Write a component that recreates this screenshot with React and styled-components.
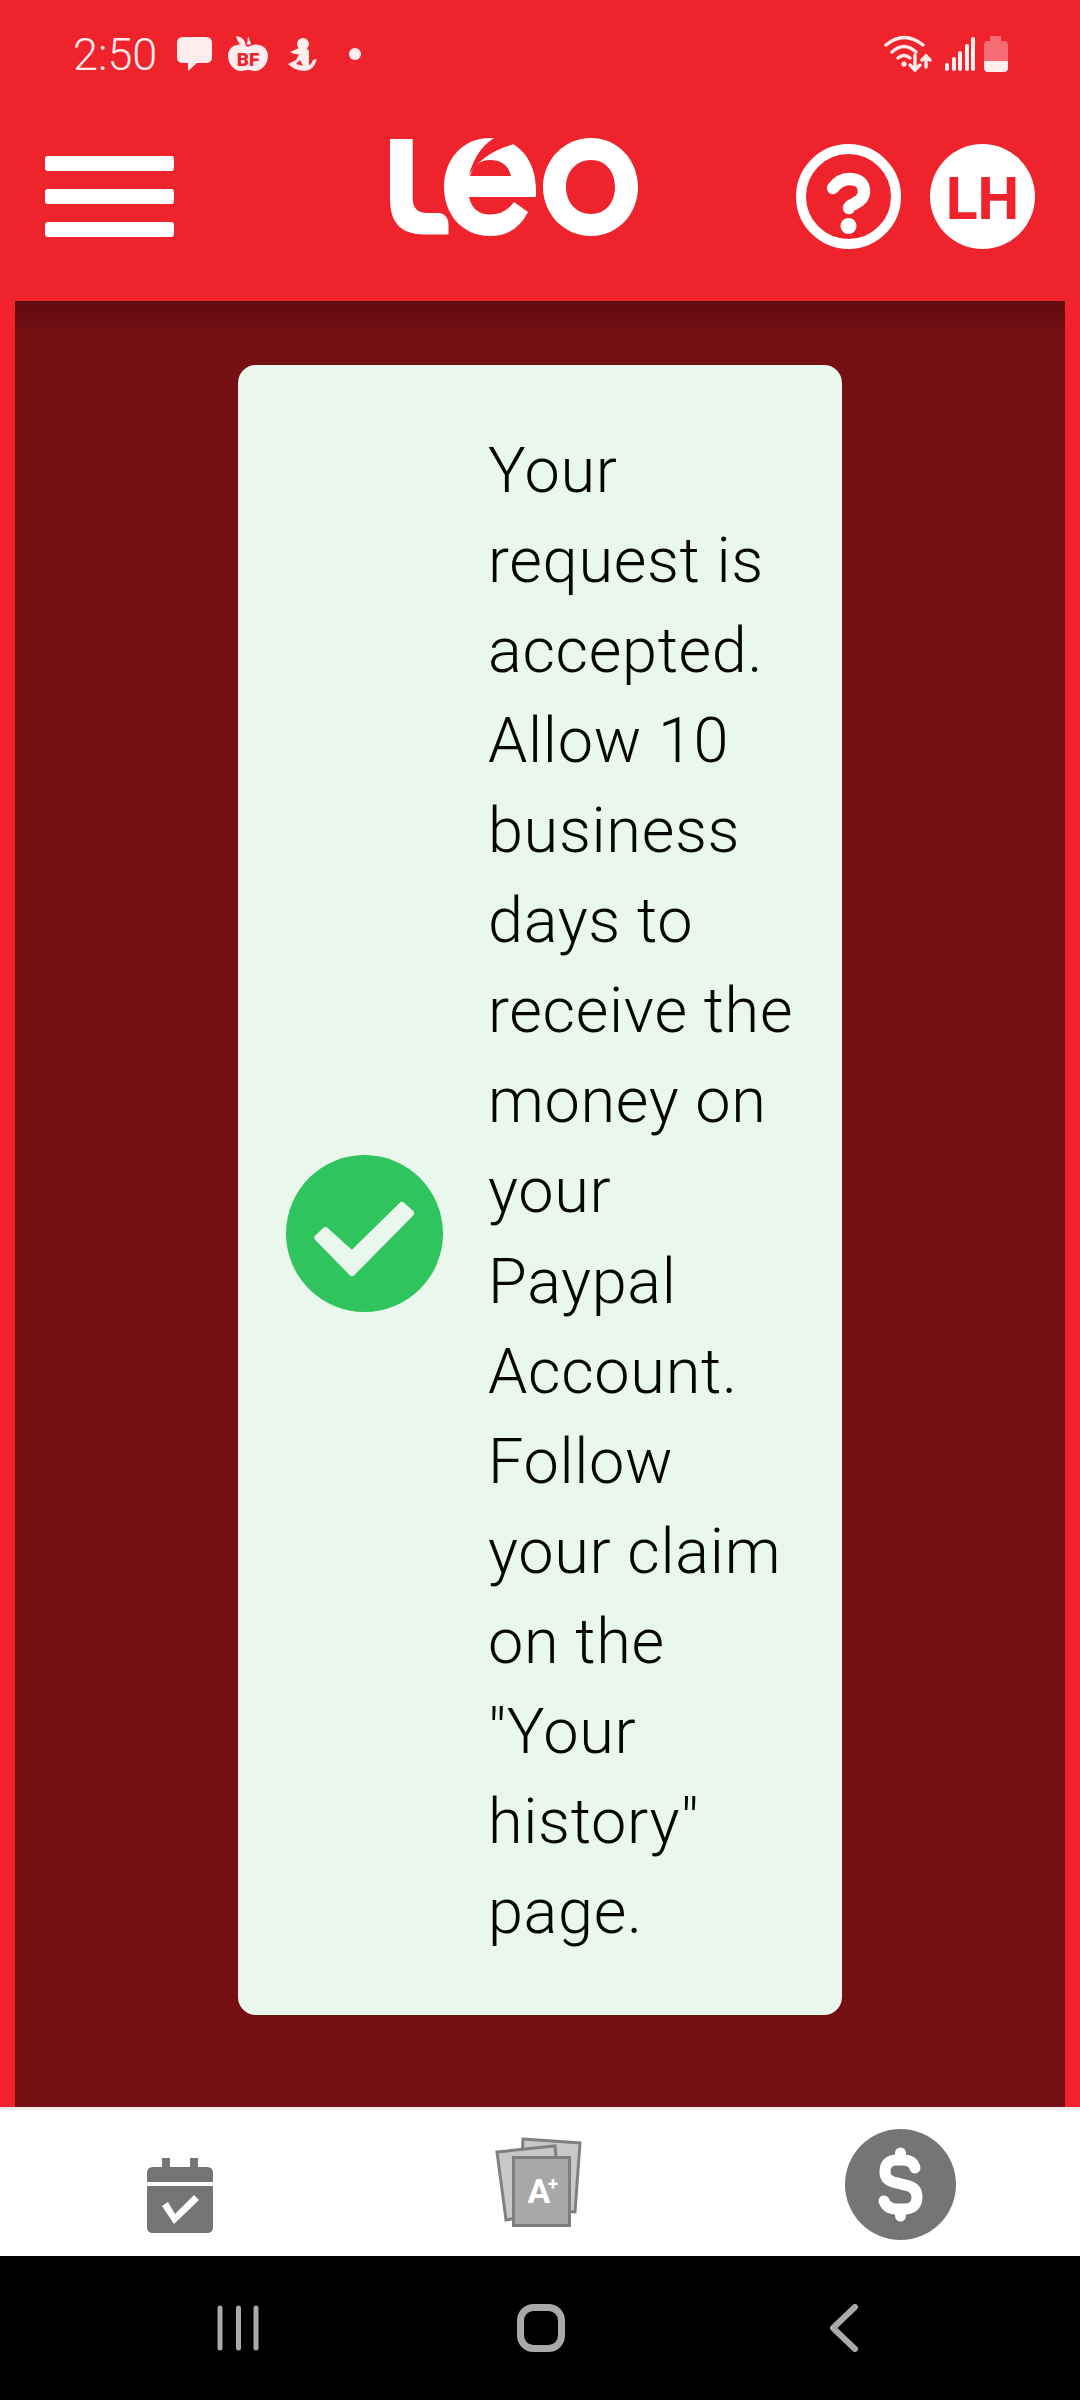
import React from "react";
import styled, { createGlobalStyle } from "styled-components";

const Global = createGlobalStyle`
  html, body { margin: 0; padding: 0; background: #000; }
  #root { width: 1080px; height: 2400px; overflow: hidden; }
`;
const Page = styled.div`
  width: 1080px; height: 2400px; display: flex; flex-direction: column;
  background: #ee232b; font-family: Roboto, "Liberation Sans", sans-serif;
`;
const StatusBar = styled.div`
  height: 110px; box-sizing: border-box; display: flex; align-items: center;
  padding: 0 72px 2px 73px; color: #ffedee;
`;
const Time = styled.span`
  font-size: 45px; font-weight: 300; line-height: 1; width: 84px; margin-right: 20px; white-space: nowrap;
`;
const StatusIcon = styled.svg`
  display: block; flex: none; margin-right: ${p => p.$gap || 0}px; fill: #ffedee;
`;
const Dot = styled.i`
  width: 12px; height: 12px; border-radius: 50%; background: #ffedee;
`;
const Spacer = styled.div` flex: 1; `;
const Toolbar = styled.header`
  height: 191px; box-sizing: border-box; display: flex; align-items: center;
  padding: 0 45px 18px;
`;
const Burger = styled.button`
  width: 129px; display: flex; flex-direction: column; gap: 18px;
  border: 0; padding: 0; background: none;
`;
const BurgerBar = styled.span`
  display: block; height: 15px; border-radius: 3px; background: #fff;
`;
const Logo = styled.svg`
  display: block; flex: none; align-self: flex-start; margin: 10px 0 0 186px;
`;
const Actions = styled.div`
  margin-left: auto; display: flex; gap: 29px;
`;
const HelpIcon = styled.svg`
  display: block;
`;
const Avatar = styled.div`
  width: 105px; height: 105px; border-radius: 50%; background: #fff;
  display: flex; align-items: center; justify-content: center; padding-top: 3px; box-sizing: border-box;
  color: #ee232b; font-size: 59px; font-weight: 700; line-height: 1;
`;
const Main = styled.main`
  flex: 1; min-height: 0; box-sizing: border-box; padding: 0 15px 3px; background: #f4222e;
  display: flex; flex-direction: column; position: relative;
  &::after {
    content: ""; position: absolute; left: 0; right: 0; bottom: 0; height: 3px; background: #f3e9e9;
  }
`;
const Overlay = styled.div`
  flex: 1; min-height: 0; box-sizing: border-box; padding: 64px 0 92px;
  display: flex; justify-content: center;
  background: linear-gradient(#600b0f 0, #750f13 34px);
`;
const Alert = styled.div`
  width: 604px; box-sizing: border-box; padding: 61px 38px 58px 48px; border-radius: 18px;
  background: #e9f7ec; display: flex; align-items: center; gap: 45px;
`;
const AlertIcon = styled.svg`
  display: block; flex: none; margin-top: 84px;
`;
const Message = styled.p`
  margin: 0; flex: 1; min-width: 0; color: #050505;
  font-size: 63px; font-weight: 300; line-height: 1.43; letter-spacing: 0.01071em;
`;
const BottomNav = styled.nav`
  height: 146px; display: grid; grid-template-columns: repeat(3, 360px); background: #fff;
`;
const NavItem = styled.div`
  display: flex; justify-content: center; align-items: flex-start;
  padding-top: ${p => p.$top}px;
`;
const NavIcon = styled.svg` display: block; `;
const SystemBar = styled.div`
  height: 144px; background: #000; box-sizing: border-box; padding: 0 85px 0 87px;
  display: grid; grid-template-columns: repeat(3, 1fr); align-items: center; justify-items: center;
`;

const Chat = () => (
  <StatusIcon $gap={16} width="35" height="34" viewBox="0 0 35 34">
    <path d="M6 0H29Q35 0 35 6V20Q35 26 29 26H20L11 34V26H6Q0 26 0 20V6Q0 0 6 0Z" />
  </StatusIcon>
);
const Apple = () => (
  <StatusIcon $gap={19} width="40" height="36" viewBox="0 0 40 36">
    <path d="M20 11C26 6 40 8 40 20C40 29 32 36 26 35Q20 33 14 35C8 36 0 29 0 20C0 8 14 6 20 11Z" />
    <path d="M8 0Q17 1 18 10Q10 10 8 0ZM20 0L23 8L19 9Z" />
    <text x="20" y="30" textAnchor="middle" fontFamily="Roboto" fontWeight="900" fontSize="19" fill="#ee232b">BF</text>
  </StatusIcon>
);
const Person = () => (
  <StatusIcon $gap={32} width="30" height="34" viewBox="0 0 30 34">
    <circle cx="16" cy="7" r="6" />
    <path fillRule="evenodd" d="M12 11L3 15Q8 18 12 17L9 23L1 27Q8 34 18 34Q27 33 30 22L26 23Q24 28 22 28L22 14Q20 10 12 11ZM13 23L9 27L16 29Z" />
  </StatusIcon>
);
const Wifi = () => (
  <StatusIcon $gap={12} width="50" height="38" viewBox="25 15 50 38" style={{ fill: "none" }}>
    <g stroke="#ffedee" strokeWidth="3.400" strokeLinecap="round" fill="none">
      <path d="M28 25Q46 10 65 25" />
      <path d="M34 32Q46 21 58 32" />
      <path d="M40 38Q46 33 52 38" />
      <path d="M57 35V50M52 45L57 50L62 45" />
      <path d="M68 36V47M64 40L68 36L72 40" />
    </g>
    <circle cx="46" cy="44" r="2.600" fill="#ffedee" />
  </StatusIcon>
);
const Signal = () => (
  <StatusIcon $gap={9} width="30" height="34" viewBox="0 0 30 34">
    <rect x="0" y="26" width="4" height="8" rx="2" />
    <rect x="7" y="20" width="4" height="14" rx="2" />
    <rect x="13" y="14" width="4" height="20" rx="2" />
    <rect x="20" y="7" width="4" height="27" rx="2" />
    <rect x="26" y="0" width="4" height="34" rx="2" />
  </StatusIcon>
);
const Battery = () => (
  <StatusIcon width="24" height="36" viewBox="0 0 24 36">
    <path d="M6 0H17V5H20Q24 5 24 9V25H0V9Q0 5 4 5H6Z" fill="#f76c74" />
    <path d="M0 25H24V32Q24 36 20 36H4Q0 36 0 32Z" />
  </StatusIcon>
);

const LeoLogo = () => (
  <Logo width="300" height="130" viewBox="0 0 300 130">
    <path fill="#fff" d="M30 19H52.700V78Q52.700 93 67 93H80Q88.500 95 88.500 105V114.500H64Q30 114.500 30 80Z" />
    <path fill="#fff" fillRule="evenodd" d="M176 77H109Q113 94.500 130 94.500Q145 94.500 154 82L168 92Q156 116 130 116C102 116 84 94 84 67C84 40 102 18 130 18C158 18 176 40 176 70ZM110 56H151Q147 40 130 40Q115 40 110 56Z" />
    <path fill="#ee232b" d="M138 16Q117 26 109 55Q122 33 154 24L152 14Z" />
    <path fill="#fff" fillRule="evenodd" d="M231 18C258 18 278 40 278 67C278 94 258 116 231 116C204 116 183 94 183 67C183 40 204 18 231 18ZM231 40C216 40 206 52 206 67C206 82 216 94 231 94C246 94 255 82 255 67C255 52 246 40 231 40Z" />
  </Logo>
);

const Help = () => (
  <HelpIcon width="105" height="105" viewBox="0 0 105 105">
    <circle cx="52.500" cy="52.500" r="47.500" fill="none" stroke="#fff" strokeWidth="10" />
    <path d="M37 44Q44 35 53 35Q68 35 68 48Q68 55 58 60Q53 62 53 64" fill="none" stroke="#fff" strokeWidth="12.500" strokeLinecap="round" />
    <circle cx="52.500" cy="82" r="8" fill="#fff" />
  </HelpIcon>
);
const Check = () => (
  <AlertIcon width="157" height="157" viewBox="0 0 157 157">
    <circle cx="78.500" cy="78.500" r="78.500" fill="#2fc45d" />
    <polygon points="32,82.700 39.300,75.700 66,99.500 116,50.500 124.500,58.300 66,117.500" fill="#e9f7ec" stroke="#e9f7ec" strokeWidth="7" strokeLinejoin="round" />
  </AlertIcon>
);
const Calendar = () => (
  <NavIcon width="66" height="75" viewBox="0 0 66 75" fill="#757575">
    <path d="M15 0H23V9H43V0H51V9H60Q66 9 66 15V24H0V15Q0 9 6 9H15Z" />
    <path d="M0 28H66V69Q66 75 60 75H6Q0 75 0 69ZM15 48L27 66L52 42L47 37L28 56L21 44Z" fillRule="evenodd" />
  </NavIcon>
);
const Cards = () => (
  <NavIcon width="90" height="92" viewBox="36 17 90 92">
    <polygon points="64,19 121,23 116,92 60,88" fill="#c8c8c8" stroke="#808080" strokeWidth="3" />
    <polygon points="38,32 96,26 102,90 47,100" fill="#c8c8c8" stroke="#808080" strokeWidth="3" />
    <rect x="54.500" y="37.500" width="56" height="68" fill="#a8a8a8" stroke="#7e7e7e" strokeWidth="3" />
    <text x="80" y="83" textAnchor="middle" fontFamily="Roboto" fontWeight="700" fontSize="34" fill="#fff">A</text>
    <text x="94" y="70" textAnchor="middle" fontFamily="Roboto" fontWeight="700" fontSize="19" fill="#fff">+</text>
  </NavIcon>
);
const Dollar = () => (
  <NavIcon width="111" height="111" viewBox="0 0 111 111">
    <circle cx="55.500" cy="55.500" r="55.500" fill="#757575" />
    <path d="M55.500 24V31M55.500 80V87M70 39Q68 31 58 31H52Q40 31 40 43Q40 52 52 54L60 56Q72 58 72 68Q72 80 59 80H52Q42 80 39 72" fill="none" stroke="#fff" strokeWidth="11" strokeLinecap="round" />
  </NavIcon>
);

const Recents = () => (
  <svg width="45" height="46" viewBox="0 0 45 46" stroke="#a9a9a9" strokeWidth="5" strokeLinecap="round">
    <path d="M4 3V43M22.500 3V43M40 3V43" />
  </svg>
);
const Home = () => (
  <svg width="48" height="48" viewBox="0 0 48 48" fill="none" stroke="#a9a9a9" strokeWidth="7">
    <rect x="3.500" y="3.500" width="41" height="41" rx="13" />
  </svg>
);
const Back = () => (
  <svg width="30" height="48" viewBox="0 0 30 48" fill="none" stroke="#a9a9a9" strokeWidth="6" strokeLinecap="round" strokeLinejoin="round">
    <path d="M26 3L4 24L26 45" />
  </svg>
);

export default function App() {
  return (
    <Page>
      <Global />
      <StatusBar>
        <Time>2:50</Time>
        <Chat />
        <Apple />
        <Person />
        <Dot />
        <Spacer />
        <Wifi />
        <Signal />
        <Battery />
      </StatusBar>
      <Toolbar>
        <Burger aria-label="Menu">
          <BurgerBar />
          <BurgerBar />
          <BurgerBar />
        </Burger>
        <LeoLogo />
        <Actions>
          <Help />
          <Avatar>LH</Avatar>
        </Actions>
      </Toolbar>
      <Main>
        <Overlay>
          <Alert>
            <Check />
            <Message>
              Your request is accepted. Allow 10 business days to receive the money on your Paypal Account. Follow your claim on the "Your history" page.
            </Message>
          </Alert>
        </Overlay>
      </Main>
      <BottomNav>
        <NavItem $top={48}><Calendar /></NavItem>
        <NavItem $top={27}><Cards /></NavItem>
        <NavItem $top={19}><Dollar /></NavItem>
      </BottomNav>
      <SystemBar>
        <Recents />
        <Home />
        <Back />
      </SystemBar>
    </Page>
  );
}
